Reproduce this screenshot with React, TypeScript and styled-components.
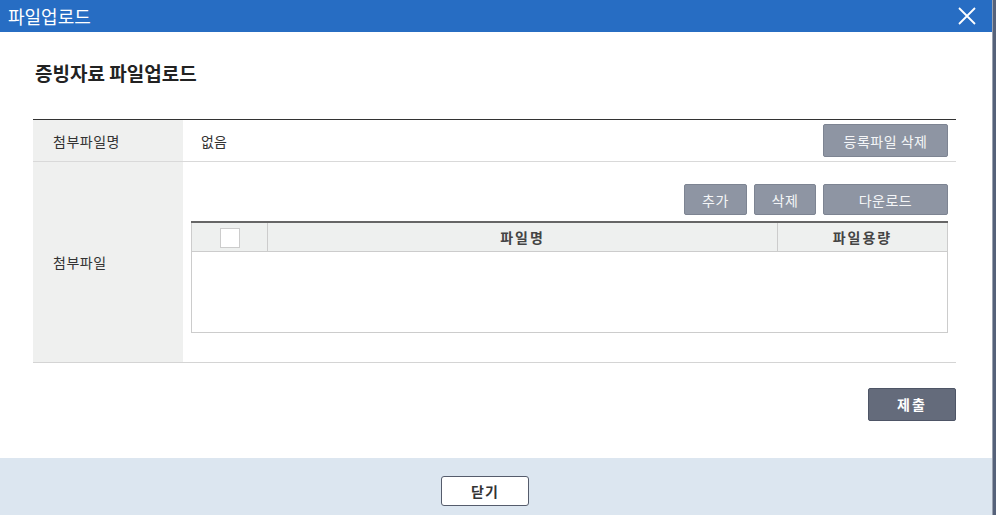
import styled, { createGlobalStyle } from "styled-components";

const GlobalStyle = createGlobalStyle`
    html, body {
        margin: 0;
        padding: 0;
        background: #56627a;
    }
    body {
        font-family: "Noto Sans CJK KR", "Noto Sans", sans-serif;
        color: #333;
    }
    * {
        box-sizing: border-box;
    }
`;

const Modal = styled.div`
    width: 993px;
    height: 515px;
    background: #ffffff;
    display: flex;
    flex-direction: column;
    border-right: 1px solid #9aa2b0;
`;

const TitleBar = styled.div`
    height: 32px;
    background: #276dc3;
    display: flex;
    align-items: center;
    justify-content: space-between;
    padding: 0 14px 0 8px;
`;

const TitleText = styled.h1`
    margin: 0;
    font-size: 18px;
    font-weight: 400;
    color: #ffffff;
    line-height: 1;
`;

const CloseButton = styled.button`
    width: 22px;
    height: 22px;
    padding: 0;
    border: none;
    background: transparent;
    display: flex;
    align-items: center;
    justify-content: center;
    cursor: pointer;
`;

const Body = styled.div`
    flex: 1;
    padding: 28px 36px 0 33px;
    display: flex;
    flex-direction: column;
`;

const Heading = styled.h2`
    margin: 0 0 33px 2px;
    font-size: 19px;
    font-weight: 700;
    color: #222;
    line-height: 26px;
`;

const FormTable = styled.div`
    border-top: 1px solid #333;
    border-bottom: 1px solid #d4d4d4;
`;

const Row = styled.div<{ $last?: boolean }>`
    display: grid;
    grid-template-columns: 150px 1fr;
    border-bottom: ${(p) => (p.$last ? "none" : "1px solid #d9d9d9")};
`;

const Label = styled.div`
    background: #eff0ef;
    display: flex;
    align-items: center;
    padding-left: 20px;
    font-size: 14px;
    letter-spacing: 0.5px;
    color: #333;
`;

const Cell = styled.div`
    display: flex;
    align-items: center;
    justify-content: space-between;
    padding: 4px 8px 4px 18px;
    min-height: 41px;
    font-size: 14px;
`;

const FileCell = styled.div`
    padding: 22px 8px 29px 8px;
    display: flex;
    flex-direction: column;
    gap: 6px;
`;

const ButtonRow = styled.div`
    display: flex;
    justify-content: flex-end;
    gap: 7px;
`;

const GrayButton = styled.button<{ $w: number }>`
    width: ${(p) => p.$w}px;
    height: 31px;
    background: #8e95a3;
    border: 1px solid #7d8492;
    border-radius: 2px;
    color: #f4f5f7;
    font-family: inherit;
    font-size: 14px;
    letter-spacing: 0.5px;
    cursor: pointer;
`;

const TallGrayButton = styled(GrayButton)`
    height: 33px;
`;

const FileTable = styled.table`
    width: 100%;
    border-collapse: collapse;
    border: 1px solid #cccccc;
    border-top: 2px solid #666;
`;

const Th = styled.th<{ $w?: number }>`
    width: ${(p) => (p.$w ? `${p.$w}px` : "auto")};
    height: 29px;
    background: #eef0ef;
    border-right: 1px solid #cccccc;
    border-bottom: 1px solid #cccccc;
    font-size: 14px;
    font-weight: 700;
    letter-spacing: 2px;
    color: #444;
    padding: 0;
`;

const CheckBox = styled.span`
    display: inline-block;
    width: 20px;
    height: 20px;
    background: #fff;
    border: 1px solid #cccccc;
    vertical-align: middle;
`;

const EmptyCell = styled.td`
    height: 81px;
`;

const SubmitRow = styled.div`
    display: flex;
    justify-content: flex-end;
    padding-top: 25px;
`;

const SubmitButton = styled.button`
    width: 88px;
    height: 33px;
    background: #646b7b;
    border: 1px solid #4e5566;
    border-radius: 2px;
    color: #ffffff;
    font-family: inherit;
    font-size: 14px;
    font-weight: 700;
    letter-spacing: 2px;
    cursor: pointer;
`;

const Footer = styled.div`
    height: 57px;
    background: #dce6f0;
    display: flex;
    justify-content: center;
    align-items: flex-start;
    padding-top: 18px;
    padding-right: 22px;
`;

const CloseTextButton = styled.button`
    width: 88px;
    height: 30px;
    background: #ffffff;
    border: 1px solid #555c6c;
    border-radius: 3px;
    color: #333;
    font-family: inherit;
    font-size: 14px;
    font-weight: 700;
    letter-spacing: 1px;
    cursor: pointer;
`;

const App = () => {
    return (
        <>
            <GlobalStyle />
            <Modal>
                <TitleBar>
                    <TitleText>파일업로드</TitleText>
                    <CloseButton aria-label="닫기">
                        <svg width="20" height="20" viewBox="0 0 20 20">
                            <path d="M2 2 L18 18 M18 2 L2 18" stroke="#fff" strokeWidth="1.8" />
                        </svg>
                    </CloseButton>
                </TitleBar>
                <Body>
                    <Heading>증빙자료 파일업로드</Heading>
                    <FormTable>
                        <Row>
                            <Label>첨부파일명</Label>
                            <Cell>
                                <span>없음</span>
                                <TallGrayButton $w={125}>등록파일 삭제</TallGrayButton>
                            </Cell>
                        </Row>
                        <Row $last>
                            <Label>첨부파일</Label>
                            <FileCell>
                                <ButtonRow>
                                    <GrayButton $w={63}>추가</GrayButton>
                                    <GrayButton $w={62}>삭제</GrayButton>
                                    <GrayButton $w={125}>다운로드</GrayButton>
                                </ButtonRow>
                                <FileTable>
                                    <thead>
                                        <tr>
                                            <Th $w={76}>
                                                <CheckBox />
                                            </Th>
                                            <Th>파일명</Th>
                                            <Th $w={170}>파일용량</Th>
                                        </tr>
                                    </thead>
                                    <tbody>
                                        <tr>
                                            <EmptyCell colSpan={3} />
                                        </tr>
                                    </tbody>
                                </FileTable>
                            </FileCell>
                        </Row>
                    </FormTable>
                    <SubmitRow>
                        <SubmitButton>제출</SubmitButton>
                    </SubmitRow>
                </Body>
                <Footer>
                    <CloseTextButton>닫기</CloseTextButton>
                </Footer>
            </Modal>
        </>
    );
};

export default App;
